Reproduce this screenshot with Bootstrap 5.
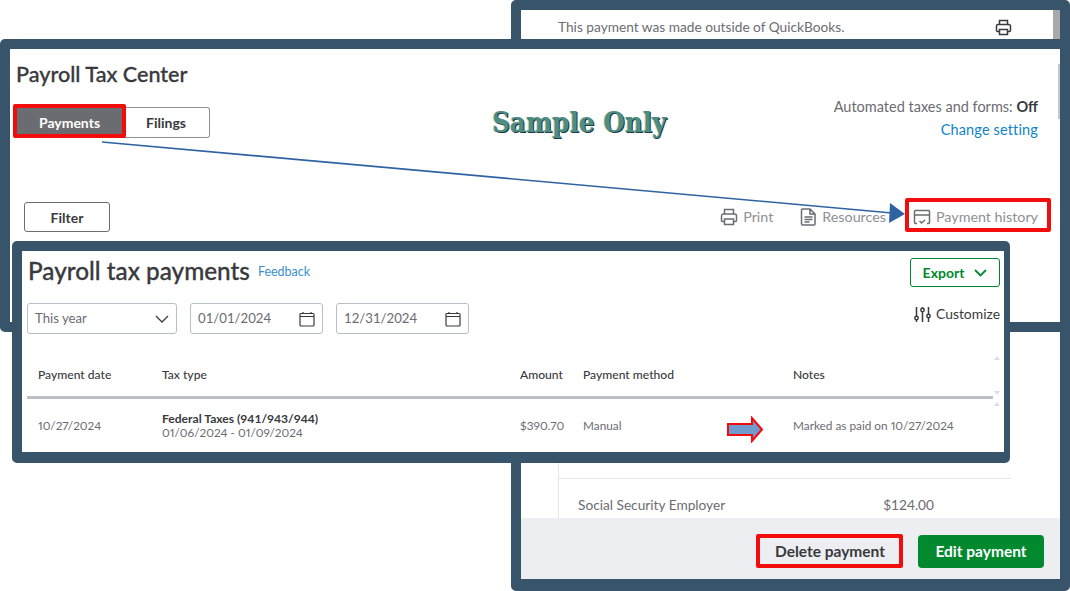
<!DOCTYPE html>
<html lang="en">
<head>
<meta charset="UTF-8" />
<title>Payroll Tax Center</title>
<link href="https://cdn.jsdelivr.net/npm/bootstrap@5.3.0/dist/css/bootstrap.min.css" rel="stylesheet" />
<style>
body { margin: 0; width: 1070px; height: 591px; overflow: hidden; background: #fff; font-family: Lato, "Liberation Sans", sans-serif; color: #393a3d; }
.shot-win { position: absolute; background: #fff; border: 10px solid #38546b; border-radius: 5px; overflow: hidden; }
.win-back { left: 511px; top: 0; width: 559px; height: 591px; border-bottom-width: 12px; }
.win-main { left: 0; top: 39px; width: 1070px; height: 293px; padding: 0 6px; }
.win-table { left: 12px; top: 241px; width: 998px; height: 222px; border-right-width: 6px; border-bottom-width: 11px; padding: 0 4px 0 5px; }
.back-note { height: 29px; padding: 6px 48px 0 37px; font-size: 13.7px; color: #6b6c72; }
.back-bar { position: absolute; right: 0; top: 0; width: 7px; height: 29px; background: #a9a9a9; }
.back-rows { margin: 424px 0 0 37px; height: 100px; border-left: 1px solid #e3e5e8; }
.back-line { height: 16px; border-bottom: 1px solid #e3e5e8; width: 452px; }
.back-row { width: 375px; padding: 16px 0 0 19px; font-size: 13.7px; color: #6b6c72; }
.back-foot { position: absolute; left: 0; right: 0; bottom: 0; height: 61px; background: #eceef1; padding: 6px 16px 0 0; }
.btn-del { width: 134px; height: 33px; font-size: 15.5px; font-weight: 700; color: #393a3d; background: #eceef1; border: 0; padding: 0; }
.btn-edit { width: 126px; height: 33px; margin-left: 21px; font-size: 15.5px; font-weight: 700; color: #fff; background: #00892e; border: 0; border-radius: 4px; padding: 0; }
.main-title { font-size: 21.6px; font-weight: 500; margin: 0; padding: 13px 0 0; line-height: 24px; -webkit-text-stroke: .3px #393a3d; }
.tab-group { margin-top: 21px; }
.tab-on, .tab-off { height: 31px; font-size: 14px; font-weight: 700; padding: 0; }
.tab-on { width: 110px; background: #6b6c72; color: #fff; border: 0; border-radius: 2px 0 0 2px; padding-right: 3px; }
.tab-off { width: 85px; background: #fff; color: #393a3d; border: 1px solid #8d9096; border-left: 0; border-radius: 0 3px 3px 0; padding-right: 2px; }
.auto-tax { font-size: 14.5px; line-height: 23px; text-align: right; color: #6b6c72; width: 260px; padding: 9px 16px 0 0; }
.auto-tax a { color: #0f84c9; text-decoration: none; letter-spacing: .15px; }
.auto-tax b { color: #393a3d; }
.filter-row { margin-top: 61px; padding: 0 16px 0 8px; }
.btn-filter { width: 86px; height: 30px; padding: 0; font-size: 14px; font-weight: 700; color: #393a3d; background: #fff; border: 1px solid #6b6c72; border-radius: 3px; }
.top-link { font-size: 14.3px; color: #8d9096; gap: 5px; margin-right: 27px; }
.top-link:last-child { margin-right: 0; }
.sample-text { position: absolute; left: 492px; top: 106px; font: bold 27.5px "DejaVu Serif", serif; font-stretch: condensed; color: #4f8d83; text-shadow: 1px 1px 0 #1d3a45, -1px 0 0 #d9e6d0; white-space: nowrap; }
.red-box { position: absolute; border: 4px solid #f30c0c; border-radius: 2px; }
.box-payments { left: 13px; top: 104px; width: 113px; height: 34px; }
.box-history { left: 905px; top: 198px; width: 146px; height: 34px; }
.box-delete { left: 756px; top: 534px; width: 147px; height: 34px; }
.table-head { padding-top: 7px; }
.table-title { font-size: 24.3px; font-weight: 500; line-height: 24px; margin-left: 1px; padding-top: 1px; -webkit-text-stroke: .3px #393a3d; }
.feedback { font-size: 12.5px; color: #3a8fc9; text-decoration: none; margin: 3px 0 0 8px; }
.btn-export { width: 90px; height: 29px; padding: 0; font-size: 14px; font-weight: 700; color: #00892e; background: #fff; border: 1px solid #00892e; border-radius: 3px; gap: 10px; }
.fake-input { height: 31px; font-size: 13.2px; color: #6b6c72; border: 1px solid #babec5; border-radius: 3px; padding: 0 7px; }
.tax-range-w { width: 150px; }
.tax-date-w { width: 133px; }
.input-gap { gap: 13px; }
.custom-link { font-size: 13.9px; color: #393a3d; gap: 5px; margin-top: 1px; }
.pay-table { width: 966px; margin: 16px 0 0; font-size: 12.1px; table-layout: fixed; color: #6b6c72; }
.pay-table th { height: 47px; padding: 4px 0 0 11px; font-weight: 500; color: #393a3d; vertical-align: middle; border-bottom: 3px solid #babec5; }
.pay-table td { height: 56px; padding: 0 0 0 11px; vertical-align: middle; border: 0; line-height: 14px; color: #6b6c72; font-size: 11.8px; font-variant-numeric: proportional-nums; }
.pay-table .fed-name { color: #393a3d; font-weight: 700; font-size: 12.1px; font-variant-numeric: normal; }
.col-date { width: 124px; }
.col-type { width: 358px; }
.col-amount { width: 63px; }
.col-method { width: 210px; }
.side-arrow { position: absolute; left: 726px; top: 416px; }
.long-arrow { position: absolute; left: 0; top: 0; pointer-events: none; }
.main-bar { position: absolute; right: 0; top: 15px; width: 2px; height: 55px; background: #c4c6ca; }
.scroll-tick { position: absolute; left: 994px; width: 0; height: 0; border-left: 3px solid transparent; border-right: 3px solid transparent; }
.tick-a { top: 356px; border-bottom: 4px solid #dcdde0; }
.tick-b { top: 391px; border-top: 4px solid #dcdde0; }
.tick-c { top: 402px; border-bottom: 4px solid #dcdde0; }
</style>
</head>
<body>

<!-- back window -->
<div class="shot-win win-back">
    <div class="back-note d-flex justify-content-between align-items-center">
        <span>This payment was made outside of QuickBooks.</span>
        <svg width="17" height="17" viewBox="0 0 17 17" fill="none" stroke="#393a3d" stroke-width="1.5"><path d="M4.5 5.5V1.500h8v4M4 12.500H2.500a1 1 0 0 1-1-1V7a1.500 1.500 0 0 1 1.500-1.500h11A1.500 1.500 0 0 1 15.500 7v4.500a1 1 0 0 1-1 1H13M4.500 10.500h8v5h-8z"/></svg>
    </div>
    <div class="back-bar"></div>
    <div class="back-rows">
        <div class="back-line"></div>
        <div class="back-row d-flex justify-content-between"><span>Social Security Employer</span><span>$124.00</span></div>
    </div>
    <div class="back-foot d-flex justify-content-end align-items-center">
        <button class="btn btn-del" type="button">Delete payment</button>
        <button class="btn btn-edit" type="button">Edit payment</button>
    </div>
</div>

<!-- payroll tax center window -->
<div class="shot-win win-main">
    <div class="main-bar"></div>
    <h1 class="main-title">Payroll Tax Center</h1>
    <div class="d-flex justify-content-between align-items-start">
        <div class="btn-group tab-group">
            <button class="btn tab-on" type="button">Payments</button>
            <button class="btn tab-off" type="button">Filings</button>
        </div>
        <div class="auto-tax">
            <div>Automated taxes and forms: <b>Off</b></div>
            <a href="#">Change setting</a>
        </div>
    </div>
    <div class="d-flex justify-content-between align-items-center filter-row">
        <button class="btn btn-filter" type="button">Filter</button>
        <div class="d-flex align-items-center">
            <span class="top-link d-flex align-items-center">
                <svg width="18" height="18" viewBox="0 0 18 18" fill="none" stroke="#6b6c72" stroke-width="1.500"><path d="M4.500 6V1.500h9V6M4 13.500H2.500a1 1 0 0 1-1-1V8A2 2 0 0 1 3.500 6h11a2 2 0 0 1 2 2v4.500a1 1 0 0 1-1 1H14M4.500 11h9v5.500h-9z"/></svg>
                Print
            </span>
            <span class="top-link d-flex align-items-center">
                <svg width="17" height="18" viewBox="0 0 17 18" fill="none" stroke="#6b6c72" stroke-width="1.500"><path d="M2.500 1h7.500l5 5v10a1 1 0 0 1-1 1H2.500a1 1 0 0 1-1-1V2a1 1 0 0 1 1-1zM10 1v5h5M4.500 9h8M4.500 11.500h8M4.500 14h5"/></svg>
                Resources
            </span>
            <span class="top-link d-flex align-items-center">
                <svg width="18" height="16" viewBox="0 0 18 16" fill="none" stroke="#6b6c72" stroke-width="1.500"><path d="M4 14.500H2.500a1 1 0 0 1-1-1V2.500a1 1 0 0 1 1-1h13a1 1 0 0 1 1 1v11a1 1 0 0 1-1 1H14M1.500 6h15M6.500 12l2 2 3.500-3"/></svg>
                Payment history
            </span>
        </div>
    </div>
</div>

<!-- payroll tax payments window -->
<div class="shot-win win-table">
    <div class="d-flex justify-content-between align-items-start table-head">
        <div class="d-flex align-items-center">
            <span class="table-title">Payroll tax payments</span>
            <a class="feedback" href="#">Feedback</a>
        </div>
        <button class="btn btn-export d-flex align-items-center justify-content-center" type="button">
            Export
            <svg width="13" height="8" viewBox="0 0 13 8" fill="none" stroke="#00892e" stroke-width="1.800"><path d="M1 1l5.500 5.500L12 1"/></svg>
        </button>
    </div>
    <div class="d-flex justify-content-between align-items-start mt-3">
        <div class="d-flex input-gap">
            <div class="fake-input d-flex justify-content-between align-items-center tax-range-w">
                This year
                <svg width="14" height="8" viewBox="0 0 14 8" fill="none" stroke="#393a3d" stroke-width="1.300"><path d="M1 1l6 6 6-6"/></svg>
            </div>
            <div class="fake-input d-flex justify-content-between align-items-center tax-date-w">
                01/01/2024
                <svg width="16" height="16" viewBox="0 0 16 16" fill="none" stroke="#393a3d" stroke-width="1.200"><path d="M2 2.500h12a1 1 0 0 1 1 1V14a1 1 0 0 1-1 1H2a1 1 0 0 1-1-1V3.500a1 1 0 0 1 1-1zM1 5.500h14M4 1v2M12 1v2"/></svg>
            </div>
            <div class="fake-input d-flex justify-content-between align-items-center tax-date-w">
                12/31/2024
                <svg width="16" height="16" viewBox="0 0 16 16" fill="none" stroke="#393a3d" stroke-width="1.200"><path d="M2 2.500h12a1 1 0 0 1 1 1V14a1 1 0 0 1-1 1H2a1 1 0 0 1-1-1V3.500a1 1 0 0 1 1-1zM1 5.500h14M4 1v2M12 1v2"/></svg>
            </div>
        </div>
        <span class="custom-link d-flex align-items-center">
            <svg width="17" height="17" viewBox="0 0 17 17" fill="none" stroke="#393a3d" stroke-width="1.500"><path d="M2.500 1v9M2.500 14v2M8.500 1v1M8.500 6v10M14.500 1v7M14.500 12v4"/><circle cx="2.500" cy="12" r="1.700"/><circle cx="8.500" cy="4" r="1.700"/><circle cx="14.500" cy="10" r="1.700"/></svg>
            Customize
        </span>
    </div>
    <table class="table pay-table">
        <thead>
            <tr><th class="col-date">Payment date</th><th class="col-type">Tax type</th><th class="col-amount">Amount</th><th class="col-method">Payment method</th><th>Notes</th></tr>
        </thead>
        <tbody>
            <tr>
                <td>10/27/2024</td>
                <td><div class="fed-name">Federal Taxes (941/943/944)</div>01/06/2024 - 01/09/2024</td>
                <td>$390.70</td>
                <td>Manual</td>
                <td>Marked as paid on 10/27/2024</td>
            </tr>
        </tbody>
    </table>
</div>

<!-- annotations -->
<div class="scroll-tick tick-a"></div>
<div class="scroll-tick tick-b"></div>
<div class="scroll-tick tick-c"></div>
<div class="sample-text">Sample Only</div>
<div class="red-box box-payments"></div>
<div class="red-box box-history"></div>
<div class="red-box box-delete"></div>
<svg class="long-arrow" width="1070" height="591" fill="#2f62a3">
    <path d="M102 142L892 213" stroke="#2f62a3" stroke-width="1.600"/>
    <path d="M905 214L890 203 889 223z"/>
</svg>
<svg class="side-arrow" width="38" height="27" viewBox="0 0 38 27"><path d="M2 8h24V2l10 11.500L26 25v-6H2z" fill="#6f9bcf" stroke="#f30c0c" stroke-width="2"/></svg>

<script src="https://cdn.jsdelivr.net/npm/bootstrap@5.3.0/dist/js/bootstrap.bundle.min.js"></script>
</body>
</html>
